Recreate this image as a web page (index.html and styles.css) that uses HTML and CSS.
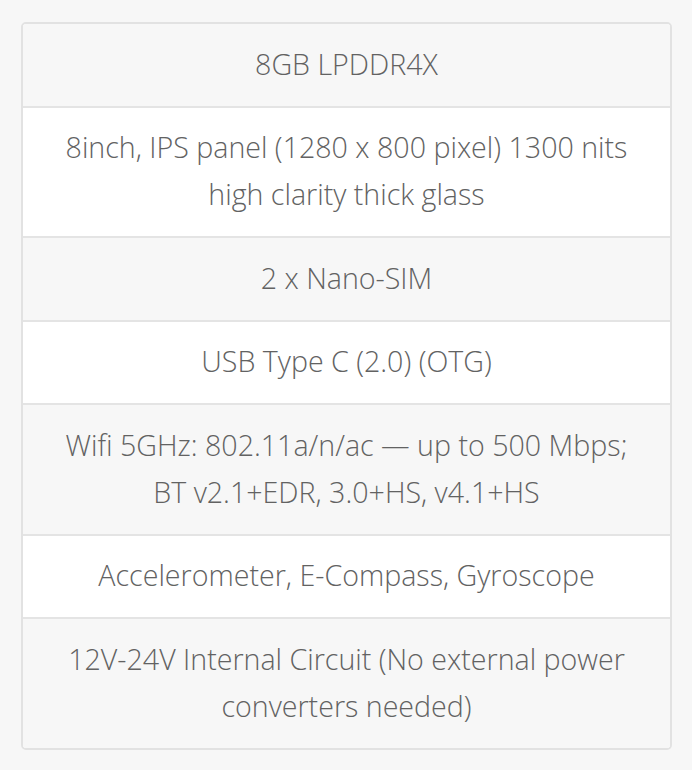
FILE: index.html
```html
<!DOCTYPE html>
<html lang="en">
<head>
<meta charset="utf-8">
<title>Specifications</title>
<link rel="stylesheet" href="styles.css">
</head>
<body>
<div class="spec-table">
  <div class="row alt">8GB LPDDR4X</div>
  <div class="row">8inch, IPS panel (1280 x 800 pixel) 1300 nits high clarity thick glass</div>
  <div class="row alt">2 x Nano-SIM</div>
  <div class="row">USB Type C (2.0) (OTG)</div>
  <div class="row alt">Wifi 5GHz: 802.11a/n/ac — up to 500 Mbps; BT v2.1+EDR, 3.0+HS, v4.1+HS</div>
  <div class="row">Accelerometer, E-Compass, Gyroscope</div>
  <div class="row alt">12V-24V Internal Circuit (No external power converters needed)</div>
</div>
</body>
</html>
```
FILE: styles.css
```css
html, body {
  margin: 0;
  background: #f7f7f7;
}
body {
  padding: 22px 20px 0 21px;
  font-family: "Open Sans", sans-serif;
  font-weight: 300;
  color: #626262;
}
.spec-table {
  width: 651px;
  box-sizing: border-box;
  border: 2px solid #e2e2e2;
  border-radius: 5px;
  overflow: hidden;
  background: #fff;
}
.row {
  padding: 15.5px 30px 19px;
  font-size: 28.6px;
  line-height: 47px;
  text-align: center;
  background: #fff;
  border-bottom: 2px solid #e4e4e4;
}
.row:last-child {
  border-bottom: 0;
}
.row.alt {
  background: #f7f7f7;
}
```
